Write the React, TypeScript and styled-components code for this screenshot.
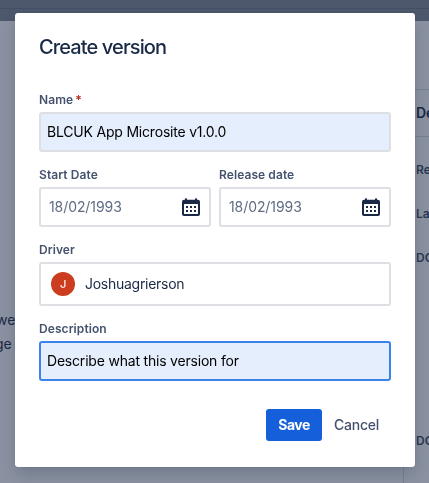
import React from "react";
import styled, { createGlobalStyle } from "styled-components";

const Global = createGlobalStyle`
  * { box-sizing: border-box; }
  body { margin: 0; overflow: hidden; font-family: Inter, "Liberation Sans", sans-serif; }
`;

const Page = styled.div`
  display: flex;
  flex-direction: column;
  width: 429px;
  height: 483px;
  overflow: hidden;
  background: #8a91a0;
  color: #1a2946;
`;

const TopBar = styled.header`
  flex: none;
  height: 21px;
  padding-top: 8px;
  background: #4d586c;
`;

const TopRule = styled.div`
  height: 1px;
  background: #434f65;
`;

const Columns = styled.div`
  flex: 1;
  display: grid;
  grid-template-columns: 404px 1fr;
`;

const Content = styled.main`
  padding-top: 287px;
  border-right: 1px solid #77808f;
  overflow: hidden;
  font-size: 14px;
  line-height: 24px;
`;

const ContentLine = styled.div<{ $shift: number }>`
  margin-left: ${(p) => p.$shift}px;
`;

const Side = styled.aside`
  padding-top: 68px;
  overflow: hidden;
  white-space: nowrap;
`;

const SideTitle = styled.div`
  height: 48px;
  padding-left: 12px;
  border-top: 1px solid #77808f;
  border-bottom: 1px solid #77808f;
  font-size: 14px;
  font-weight: 600;
  line-height: 46px;
`;

const SideLabel = styled.div<{ $gap: number }>`
  margin-top: ${(p) => p.$gap}px;
  padding-left: 12px;
  color: #2a3852;
  font-size: 12px;
  font-weight: 600;
  line-height: 16px;
`;

const Overlay = styled.div`
  position: fixed;
  inset: 0;
  padding: 13px 14px 16px 15px;
`;

const Dialog = styled.form`
  display: flex;
  flex-direction: column;
  gap: 15px;
  width: 400px;
  height: 454px;
  padding: 22px 24px 26px;
  border-radius: 3px;
  background: #fff;
  box-shadow: 0 0 1px rgba(9, 30, 66, 0.31), 0 8px 16px -2px rgba(9, 30, 66, 0.22);
`;

const Title = styled.h1`
  margin: 0 0 18px;
  color: #1a2946;
  font-size: 20px;
  font-weight: 550;
  line-height: 24px;
  letter-spacing: -0.88px;
`;

const FieldBox = styled.div`
  display: flex;
  flex-direction: column;
  gap: 4px;
  flex: 1 1 0;
`;

const Stack = styled.div`
  display: flex;
  flex-direction: column;
  gap: 15px;
`;

const Label = styled.label`
  color: #44526d;
  font-size: 12px;
  font-weight: 600;
  line-height: 16px;
  letter-spacing: 0.08px;
`;

const Required = styled.span`
  margin-left: 2px;
  color: #ae2a19;
`;

const Control = styled.div<{ $filled?: boolean; $focused?: boolean; $tall?: boolean }>`
  display: flex;
  align-items: center;
  height: ${(p) => (p.$tall ? 44 : 40)}px;
  padding: 0 ${(p) => (p.$filled ? 6 : 8)}px;
  border: 2px solid ${(p) => (p.$focused ? "#3b82ed" : "#dedfe4")};
  border-radius: 3px;
  background: ${(p) => (p.$filled ? "#e4eefd" : "#fff")};
  color: ${(p) => (p.$filled ? "#000" : "#1a2946")};
  font-size: 14px;
  line-height: 20px;
  letter-spacing: -0.2px;
`;

const DateRow = styled.div`
  display: flex;
  gap: 8px;
`;

const DateText = styled.span`
  flex: 1;
  color: #5e6c84;
  letter-spacing: -0.08px;
`;

const Avatar = styled.span`
  display: flex;
  align-items: center;
  justify-content: center;
  width: 24px;
  height: 24px;
  margin: 0 10px 0 2px;
  border-radius: 50%;
  background: #cc3d20;
  color: #f8dcd5;
  font-size: 11px;
  font-weight: 600;
  line-height: 24px;
`;

const PersonName = styled.span`
  letter-spacing: -0.27px;
`;

const Actions = styled.div`
  display: flex;
  justify-content: flex-end;
  margin-top: auto;
`;

const Button = styled.button<{ $primary?: boolean }>`
  width: ${(p) => (p.$primary ? 56 : 69)}px;
  height: 32px;
  padding: 0;
  border: 0;
  border-radius: 3px;
  background: ${(p) => (p.$primary ? "#155fda" : "transparent")};
  color: ${(p) => (p.$primary ? "#fff" : "#44526d")};
  font-family: inherit;
  font-size: 14px;
  font-weight: ${(p) => (p.$primary ? 650 : 500)};
  line-height: 32px;
  letter-spacing: ${(p) => (p.$primary ? -0.55 : -0.22)}px;
`;

const Calendar = styled.svg`
  flex: none;
  margin-right: 1px;
`;

const CalendarIcon = () => (
  <Calendar width="18" height="18" viewBox="0 0 18 18">
    <rect x="3" y="0.2" width="2" height="3" rx="0.8" fill="#1a2946" />
    <rect x="13" y="0.2" width="2" height="3" rx="0.8" fill="#1a2946" />
    <rect x="0" y="1.7" width="18" height="16.3" rx="2" fill="#1a2946" />
    <rect x="2" y="6" width="14" height="10" rx="0.5" fill="#fff" />
    {[4, 8, 12].map((x) =>
      [8, 12].map((y) => <rect key={`${x}-${y}`} x={x} y={y} width="2" height="2" fill="#1a2946" />)
    )}
  </Calendar>
);

const DateField = ({ label }: { label: string }) => (
  <FieldBox>
    <Label>{label}</Label>
    <Control>
      <DateText>18/02/1993</DateText>
      <CalendarIcon />
    </Control>
  </FieldBox>
);

export default function App() {
  return (
    <>
      <Global />
      <Page>
        <TopBar>
          <TopRule />
        </TopBar>
        <Columns>
          <Content>
            <ContentLine $shift={-4}>we</ContentLine>
            <ContentLine $shift={-5}>ge</ContentLine>
          </Content>
          <Side>
            <SideTitle>Details</SideTitle>
            <SideLabel $gap={25}>Release</SideLabel>
            <SideLabel $gap={28}>Labels</SideLabel>
            <SideLabel $gap={28}>DOR</SideLabel>
            <SideLabel $gap={167}>DOD</SideLabel>
          </Side>
        </Columns>
      </Page>
      <Overlay>
        <Dialog>
          <Title>Create version</Title>
          <Stack>
            <FieldBox>
              <Label>
                Name<Required>*</Required>
              </Label>
              <Control $filled>BLCUK App Microsite v1.0.0</Control>
            </FieldBox>
            <DateRow>
              <DateField label="Start Date" />
              <DateField label="Release date" />
            </DateRow>
            <FieldBox>
              <Label>Driver</Label>
              <Control $tall>
                <Avatar>J</Avatar>
                <PersonName>Joshuagrierson</PersonName>
              </Control>
            </FieldBox>
            <FieldBox>
              <Label>Description</Label>
              <Control $filled $focused>
                Describe what this version for
              </Control>
            </FieldBox>
          </Stack>
          <Actions>
            <Button type="button" $primary>
              Save
            </Button>
            <Button type="button">Cancel</Button>
          </Actions>
        </Dialog>
      </Overlay>
    </>
  );
}
